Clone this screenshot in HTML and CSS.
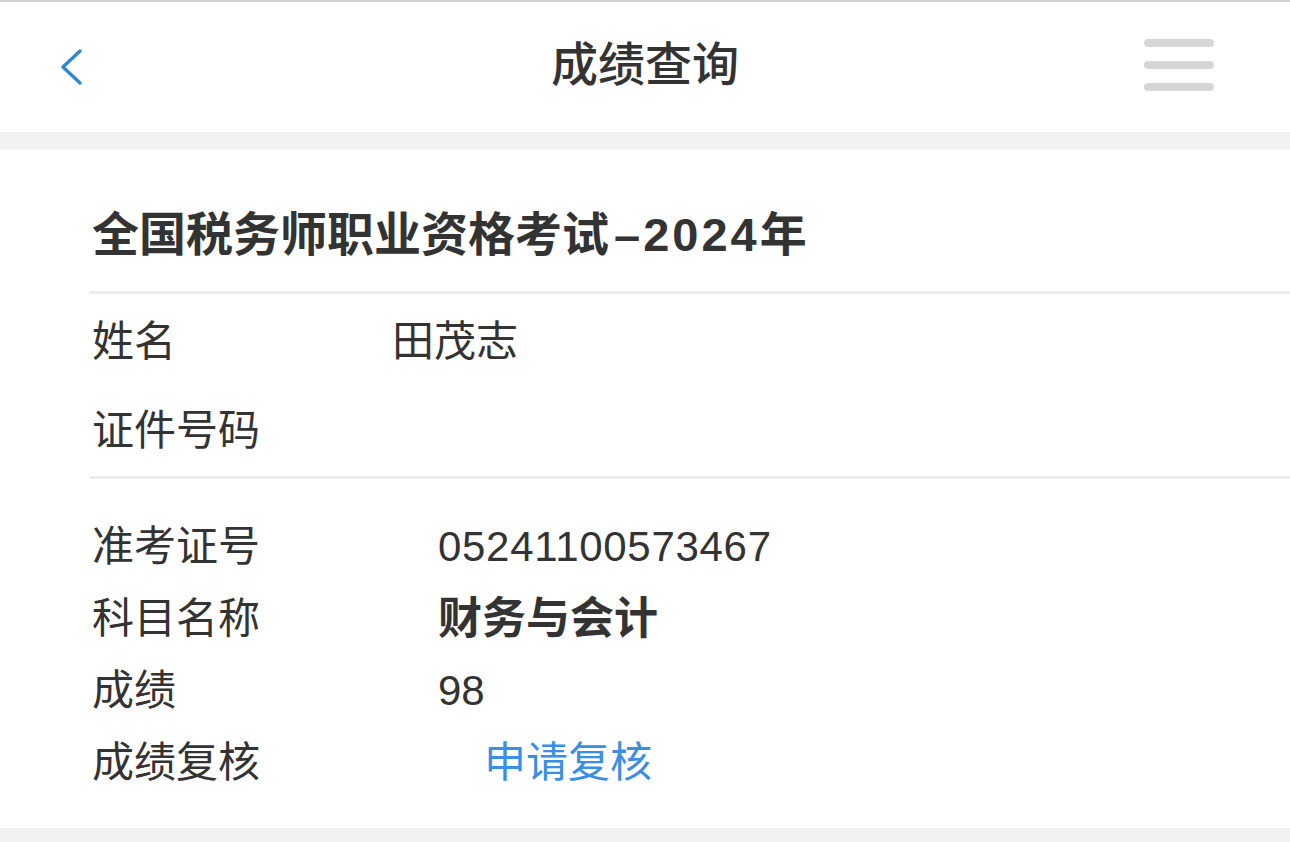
FILE: index.html
```html
<!DOCTYPE html>
<html lang="zh-CN">
<head>
    <meta charset="UTF-8">
    <meta name="viewport" content="width=device-width, initial-scale=1.0">
    <title>成绩查询</title>
    <link rel="stylesheet" href="styles.css">
</head>
<body>
    <header class="nav-bar">
        <a class="nav-back" href="#" aria-label="返回">
            <svg width="30" height="40" viewBox="0 0 30 40">
                <polyline points="20,3 3,19 20,35" fill="none" stroke="#2f86d6" stroke-width="3.4" stroke-linecap="round" stroke-linejoin="round"/>
            </svg>
        </a>
        <h1 class="nav-title">成绩查询</h1>
        <div class="nav-menu" aria-label="菜单">
            <span></span>
            <span></span>
            <span></span>
        </div>
    </header>

    <main class="card">
        <h2 class="card-title">全国税务师职业资格考试<span class="year">–2024</span>年</h2>

        <section class="info-group">
            <div class="info-row">
                <span class="info-label">姓名</span>
                <span class="info-value">田茂志</span>
            </div>
            <div class="info-row">
                <span class="info-label">证件号码</span>
                <span class="info-value"></span>
            </div>
        </section>

        <section class="info-group score-group">
            <div class="info-row">
                <span class="info-label">准考证号</span>
                <span class="info-value number">05241100573467</span>
            </div>
            <div class="info-row">
                <span class="info-label">科目名称</span>
                <span class="info-value strong">财务与会计</span>
            </div>
            <div class="info-row">
                <span class="info-label">成绩</span>
                <span class="info-value">98</span>
            </div>
            <div class="info-row">
                <span class="info-label">成绩复核</span>
                <a class="info-value review-link" href="#">申请复核</a>
            </div>
        </section>
    </main>
</body>
</html>
```

FILE: styles.css
```css
:root {
    --text: #333333;
    --blue: #3a8ee6;
    --page: #f2f2f2;
    --line: #ececec;
    --menu: #d6d6d6;
}

* {
    margin: 0;
    padding: 0;
    box-sizing: border-box;
}

body {
    font-family: "Liberation Sans", "Noto Sans CJK SC", sans-serif;
    color: var(--text);
    background: var(--page);
    height: 842px;
    overflow: hidden;
}

/* top navigation */
.nav-bar {
    height: 132px;
    background: #ffffff;
    border-top: 2px solid #d2d2d2;
    display: flex;
    align-items: center;
    justify-content: space-between;
    padding: 0 76px 0 60px;
    position: relative;
}

.nav-back {
    display: flex;
    width: 30px;
    height: 40px;
    margin-top: 2px;
}

.nav-title {
    position: absolute;
    left: 0;
    right: 0;
    top: 33px;
    text-align: center;
    font-size: 47px;
    font-weight: 500;
    line-height: 60px;
    pointer-events: none;
}

.nav-menu {
    display: flex;
    flex-direction: column;
    gap: 14px;
    width: 70px;
    margin-top: -4px;
}

.nav-menu span {
    display: block;
    height: 8px;
    border-radius: 4px;
    background: var(--menu);
}

/* result card */
.card {
    margin-top: 18px;
    background: #ffffff;
    padding-left: 90px;
    height: 678px;
}

.card-title {
    font-size: 47px;
    font-weight: 700;
    line-height: 50px;
    padding: 60px 0 31px 2px;
    border-bottom: 3px solid var(--line);
}

.card-title .year {
    letter-spacing: 3px;
    padding-left: 5px;
}

.info-group {
    padding: 3px 0 1px;
    border-bottom: 3px solid var(--line);
}

.info-row {
    display: flex;
    align-items: center;
    height: 89px;
    padding-left: 2px;
    font-size: 42px;
    line-height: 50px;
}

.info-label {
    width: 300px;
    flex-shrink: 0;
}

.score-group {
    padding: 32px 0 0;
    border-bottom: none;
}

.score-group .info-row {
    height: 72px;
}

.score-group .info-label {
    width: 346px;
}

.info-value.number {
    letter-spacing: 0.7px;
}

.info-value.strong {
    font-weight: 700;
    font-size: 44px;
}

.review-link {
    margin-left: 46px;
    color: var(--blue);
    text-decoration: none;
}
```
